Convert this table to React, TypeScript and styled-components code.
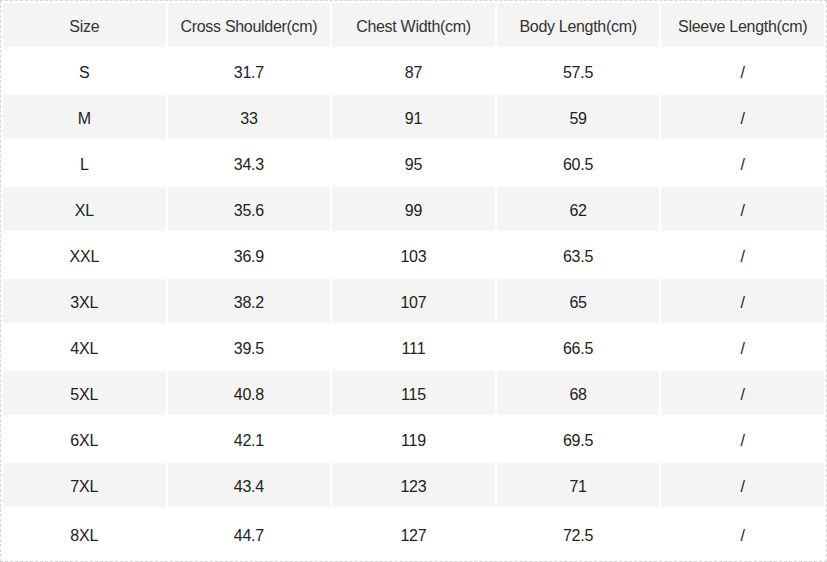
import React from 'react'
import styled, { createGlobalStyle } from 'styled-components'

const headers = ['Size', 'Cross Shoulder(cm)', 'Chest Width(cm)', 'Body Length(cm)', 'Sleeve Length(cm)']

const rows = [
  ['S', '31.7', '87', '57.5', '/'],
  ['M', '33', '91', '59', '/'],
  ['L', '34.3', '95', '60.5', '/'],
  ['XL', '35.6', '99', '62', '/'],
  ['XXL', '36.9', '103', '63.5', '/'],
  ['3XL', '38.2', '107', '65', '/'],
  ['4XL', '39.5', '111', '66.5', '/'],
  ['5XL', '40.8', '115', '68', '/'],
  ['6XL', '42.1', '119', '69.5', '/'],
  ['7XL', '43.4', '123', '71', '/'],
  ['8XL', '44.7', '127', '72.5', '/'],
]

export default function App() {
  return (
    <>
      <GlobalStyle />
      <Frame>
        <SizeTable>
          <thead>
            <Row $shaded>
              {headers.map((h) => (
                <HeadCell key={h}>{h}</HeadCell>
              ))}
            </Row>
          </thead>
          <tbody>
            {rows.map((r, i) => (
              <Row key={r[0]} $shaded={i % 2 === 1} $last={i === rows.length - 1}>
                {r.map((v, j) => (
                  <Cell key={j}>{v}</Cell>
                ))}
              </Row>
            ))}
          </tbody>
        </SizeTable>
      </Frame>
    </>
  )
}

const GlobalStyle = createGlobalStyle`
  html, body {
    margin: 0;
    padding: 0;
    background: #ffffff;
  }
  body {
    font-family: "Liberation Sans", Arial, sans-serif;
  }
`

const Frame = styled.div`
  width: 827px;
  height: 562px;
  box-sizing: border-box;
  border: 1px dashed #d4d4d4;
  background: #ffffff;
`

const SizeTable = styled.table`
  width: 100%;
  height: 100%;
  border-collapse: separate;
  border-spacing: 2px;
  table-layout: fixed;
`

const Row = styled.tr<{ $shaded?: boolean; $last?: boolean }>`
  height: ${(p) => (p.$last ? '50px' : '44px')};
  background: ${(p) => (p.$shaded ? '#f4f4f4' : '#ffffff')};

  td,
  th {
    background: ${(p) => (p.$shaded ? '#f4f4f4' : '#ffffff')};
  }
`

const HeadCell = styled.th`
  padding: 4px 0 0;
  font-weight: 400;
  font-size: 16px;
  letter-spacing: -0.3px;
  color: #333333;
  text-align: center;
  vertical-align: middle;
  white-space: nowrap;
`

const Cell = styled.td`
  padding: 4px 0 0;
  font-size: 16px;
  letter-spacing: -0.2px;
  color: #222222;
  text-align: center;
  vertical-align: middle;
`
